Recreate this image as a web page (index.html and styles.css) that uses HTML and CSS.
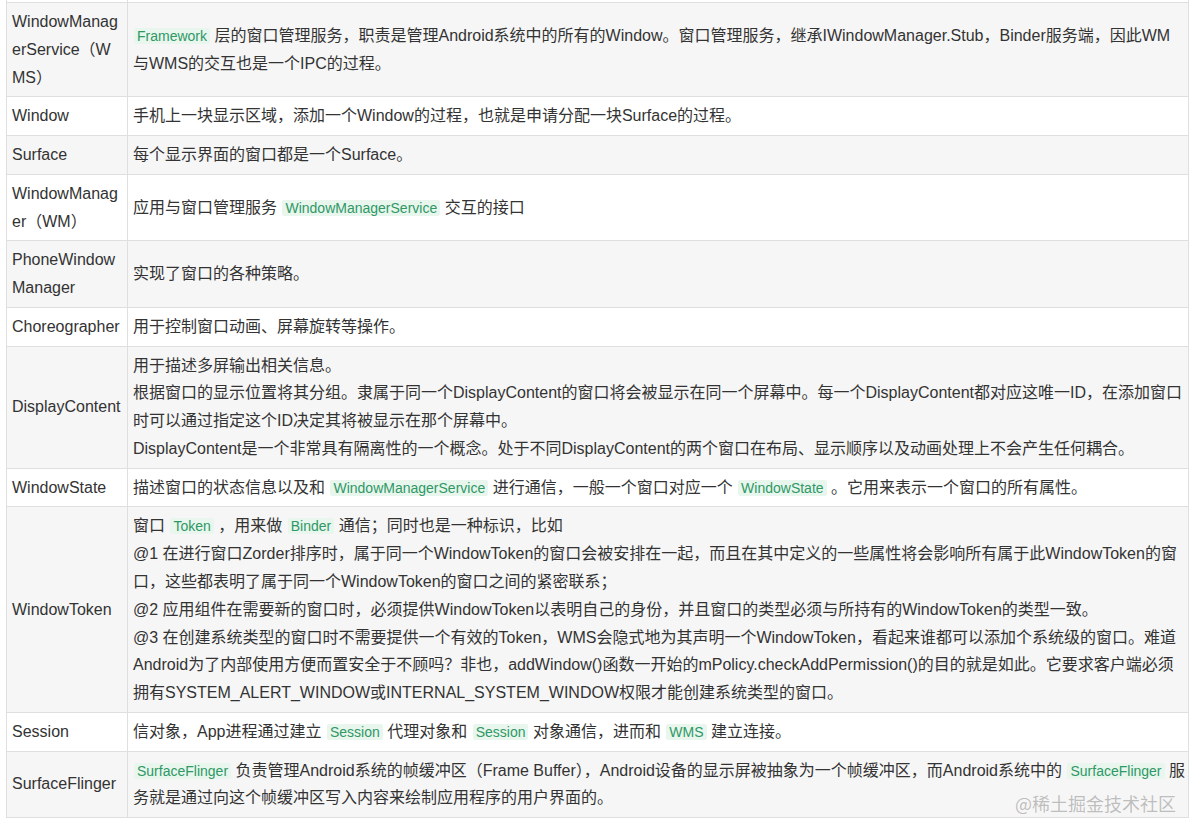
FILE: index.html
```html
<!DOCTYPE html>
<html lang="zh-CN">
<head>
<meta charset="utf-8">
<title>WMS 概念表</title>
<link rel="stylesheet" href="styles.css">
</head>
<body>
<div class="page">
<table class="terms">
<colgroup><col class="key"><col class="desc"></colgroup>
<tbody>
<tr class="cut"><td></td><td></td></tr>
<tr class="alt"><td>WindowManagerService（WMS）</td><td><code>Framework</code> 层的窗口管理服务，职责是管理Android系统中的所有的Window。窗口管理服务，继承IWindowManager.Stub，Binder服务端，因此WM与WMS的交互也是一个IPC的过程。</td></tr>
<tr><td>Window</td><td>手机上一块显示区域，添加一个Window的过程，也就是申请分配一块Surface的过程。</td></tr>
<tr class="alt"><td>Surface</td><td>每个显示界面的窗口都是一个Surface。</td></tr>
<tr><td>WindowManager（WM）</td><td>应用与窗口管理服务 <code>WindowManagerService</code> 交互的接口</td></tr>
<tr class="alt"><td>PhoneWindowManager</td><td>实现了窗口的各种策略。</td></tr>
<tr><td>Choreographer</td><td>用于控制窗口动画、屏幕旋转等操作。</td></tr>
<tr class="alt"><td>DisplayContent</td><td>用于描述多屏输出相关信息。<br>根据窗口的显示位置将其分组。隶属于同一个DisplayContent的窗口将会被显示在同一个屏幕中。每一个DisplayContent都对应这唯一ID，在添加窗口时可以通过指定这个ID决定其将被显示在那个屏幕中。<br>DisplayContent是一个非常具有隔离性的一个概念。处于不同DisplayContent的两个窗口在布局、显示顺序以及动画处理上不会产生任何耦合。</td></tr>
<tr><td>WindowState</td><td>描述窗口的状态信息以及和 <code>WindowManagerService</code> 进行通信，一般一个窗口对应一个 <code>WindowState</code> 。它用来表示一个窗口的所有属性。</td></tr>
<tr class="alt"><td>WindowToken</td><td>窗口 <code>Token</code> ，用来做 <code>Binder</code> 通信；同时也是一种标识，比如<br>@1 在进行窗口Zorder排序时，属于同一个WindowToken的窗口会被安排在一起，而且在其中定义的一些属性将会影响所有属于此WindowToken的窗口，这些都表明了属于同一个WindowToken的窗口之间的紧密联系；<br>@2 应用组件在需要新的窗口时，必须提供WindowToken以表明自己的身份，并且窗口的类型必须与所持有的WindowToken的类型一致。<br>@3 在创建系统类型的窗口时不需要提供一个有效的Token，WMS会隐式地为其声明一个WindowToken，看起来谁都可以添加个系统级的窗口。难道Android为了内部使用方便而置安全于不顾吗？非也，addWindow()函数一开始的mPolicy.checkAddPermission()的目的就是如此。它要求客户端必须拥有SYSTEM_ALERT_WINDOW或INTERNAL_SYSTEM_WINDOW权限才能创建系统类型的窗口。</td></tr>
<tr><td>Session</td><td>信对象，App进程通过建立 <code>Session</code> 代理对象和 <code>Session</code> 对象通信，进而和 <code>WMS</code> 建立连接。</td></tr>
<tr class="alt"><td>SurfaceFlinger</td><td><code>SurfaceFlinger</code> 负责管理Android系统的帧缓冲区（Frame Buffer），Android设备的显示屏被抽象为一个帧缓冲区，而Android系统中的 <code>SurfaceFlinger</code> 服务就是通过向这个帧缓冲区写入内容来绘制应用程序的用户界面的。</td></tr>
</tbody>
</table>
<div class="watermark">@稀土掘金技术社区</div>
</div>
</body>
</html>
```
FILE: styles.css
```css
html, body {
  margin: 0;
  padding: 0;
  background: #ffffff;
}

body {
  font-family: "Liberation Sans", Arial, "Noto Sans CJK SC", sans-serif;
  color: #333333;
}

.page {
  position: relative;
  padding: 0 0 0 6px;
  height: 827px;
  overflow: hidden;
}

.terms {
  border-collapse: collapse;
  table-layout: fixed;
  width: 1183px;
  font-size: 16px;
  line-height: 27.76px;
  word-break: break-all;
}

.terms col.key {
  width: 121px;
}

.terms td {
  border: 1px solid #dfdfdf;
  padding: 5px 5px;
  vertical-align: middle;
  background: #ffffff;
}

.terms td + td {
  padding-right: 2px;
}

.terms tr.alt td {
  background: #f6f6f6;
}

.terms tr.cut td {
  border-top: 0;
  height: 2px;
  padding: 0;
  line-height: 0;
}

.terms code {
  font-family: "Liberation Sans", Arial, "Noto Sans CJK SC", sans-serif;
  font-size: 14px;
  line-height: normal;
  color: #2f9865;
  background: #e8f6ee;
  padding: 0 3px;
  margin: 0 0 0 1px;
  border-radius: 2px;
}

.watermark {
  position: absolute;
  right: 24px;
  top: 791px;
  font-family: "Noto Sans CJK SC", sans-serif;
  font-size: 18px;
  line-height: 24px;
  color: rgba(120, 120, 120, 0.45);
}
```
